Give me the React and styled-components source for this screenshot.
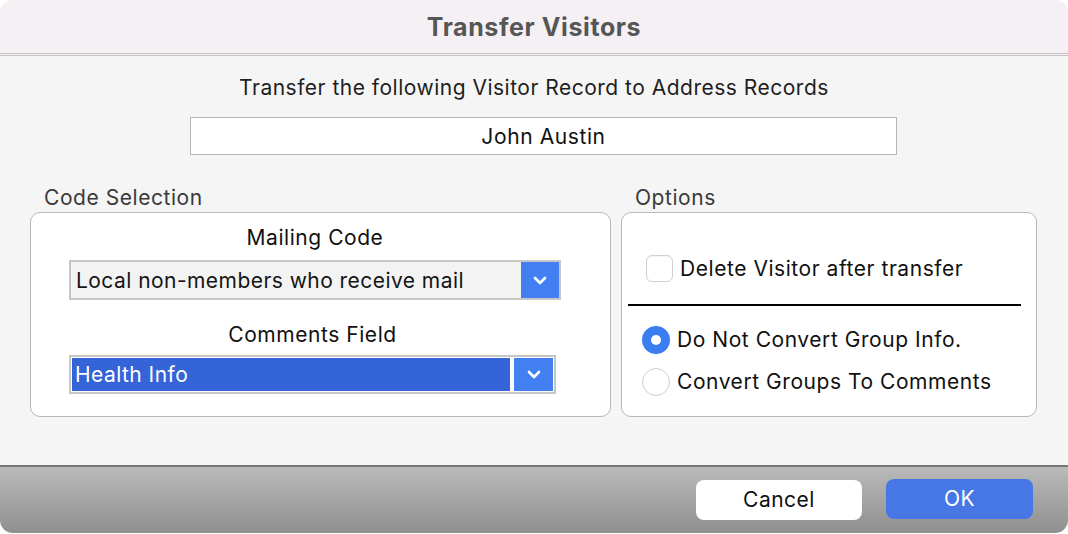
import React from 'react';
import styled, { createGlobalStyle } from 'styled-components';

const GlobalStyle = createGlobalStyle`
  html, body {
    margin: 0;
    padding: 0;
    background: #ffffff;
  }
  body {
    font-family: Inter, "Liberation Sans", Arial, sans-serif;
    color: #1c1c1c;
  }
`;

const Chevron = () => (
  <svg width="14" height="9" viewBox="0 0 14 9">
    <polyline points="2,2 7,7 12,2" fill="none" stroke="#fff" strokeWidth="2.6" strokeLinecap="round" strokeLinejoin="round" />
  </svg>
);

export default function App() {
  return (
    <>
      <GlobalStyle />
      <Window>
        <TitleBar>Transfer Visitors</TitleBar>
        <Body>
          <Prompt>Transfer the following Visitor Record to Address Records</Prompt>
          <NameBox>John Austin</NameBox>
          <Groups>
            <Group width="581px">
              <GroupLabel>Code Selection</GroupLabel>
              <GroupBox padding="13px 0 0 38px">
                <Field width="492px">
                  <FieldLabel>Mailing Code</FieldLabel>
                  <Select>
                    <SelectValue>Local non-members who receive mail</SelectValue>
                    <ArrowButton width="38px"><Chevron /></ArrowButton>
                  </Select>
                </Field>
                <Field width="487px" top="23px">
                  <FieldLabel>Comments Field</FieldLabel>
                  <Select focused>
                    <SelectValue focused>Health Info</SelectValue>
                    <ArrowButton width="39px"><Chevron /></ArrowButton>
                  </Select>
                </Field>
              </GroupBox>
            </Group>
            <Group width="416px">
              <GroupLabel>Options</GroupLabel>
              <GroupBox padding="42px 0 0 0">
                <CheckRow>
                  <Checkbox />
                  <OptionText>Delete Visitor after transfer</OptionText>
                </CheckRow>
                <Divider />
                <RadioList>
                  <RadioRow>
                    <Radio checked />
                    <OptionText>Do Not Convert Group Info.</OptionText>
                  </RadioRow>
                  <RadioRow>
                    <Radio />
                    <OptionText>Convert Groups To Comments</OptionText>
                  </RadioRow>
                </RadioList>
              </GroupBox>
            </Group>
          </Groups>
        </Body>
        <Footer>
          <Button>Cancel</Button>
          <Button primary>OK</Button>
        </Footer>
      </Window>
    </>
  );
}

const Window = styled.div`
  width: 1068px;
  height: 533px;
  border-radius: 13px;
  overflow: hidden;
  display: flex;
  flex-direction: column;
  background: #f5f5f5;
`;

const TitleBar = styled.div`
  height: 56px;
  flex: none;
  display: flex;
  align-items: center;
  justify-content: center;
  background: #f4f0f4;
  border-bottom: 3px double #c4c4c4;
  box-sizing: border-box;
  font-weight: 700;
  font-size: 25px;
  letter-spacing: 0.6px;
  color: #565656;
  padding-top: 1px;
`;

const Body = styled.div`
  flex: 1;
  display: flex;
  flex-direction: column;
  padding-top: 20px;
`;

const Prompt = styled.div`
  text-align: center;
  font-size: 21px;
  line-height: 24px;
  letter-spacing: 0.5px;
  color: #1e1e1e;
`;

const NameBox = styled.div`
  margin: 17px 0 0 190px;
  width: 707px;
  height: 38px;
  box-sizing: border-box;
  border: 1px solid #b4b4b4;
  background: #ffffff;
  display: flex;
  align-items: center;
  justify-content: center;
  font-size: 21px;
  letter-spacing: 0.6px;
  color: #111;
`;

const Groups = styled.div`
  display: flex;
  gap: 10px;
  margin: 31px 0 0 30px;
`;

const Group = styled.div`
  width: ${p => p.width};
  display: flex;
  flex-direction: column;
`;

const GroupLabel = styled.div`
  font-size: 21px;
  line-height: 24px;
  height: 26px;
  padding-left: 14px;
  color: #3a3a3a;
  letter-spacing: 0.55px;
`;

const GroupBox = styled.div`
  height: 205px;
  box-sizing: border-box;
  border: 1px solid #b8b8b8;
  border-radius: 10px;
  background: #ffffff;
  padding: ${p => p.padding};
  display: flex;
  flex-direction: column;
`;

const Field = styled.div`
  width: ${p => p.width};
  margin-top: ${p => p.top || '0'};
  display: flex;
  flex-direction: column;
`;

const FieldLabel = styled.div`
  text-align: center;
  font-size: 21px;
  line-height: 24px;
  color: #111;
  letter-spacing: 0.55px;
  margin-bottom: 10px;
`;

const Select = styled.div`
  height: ${p => (p.focused ? '39px' : '40px')};
  box-sizing: border-box;
  border: 2px solid #c6c6c6;
  background: ${p => (p.focused ? '#ffffff' : '#f3f3f3')};
  padding: ${p => (p.focused ? '1px' : '0')};
  gap: ${p => (p.focused ? '4px' : '0')};
  display: flex;
  margin-top: ${p => (p.focused ? '-2px' : '0')};
`;

const SelectValue = styled.div`
  flex: 1;
  display: flex;
  align-items: center;
  padding-left: ${p => (p.focused ? '3px' : '5px')};
  font-size: 21px;
  color: ${p => (p.focused ? '#ffffff' : '#151515')};
  background: ${p => (p.focused ? '#3464d8' : 'transparent')};
  letter-spacing: 0.45px;
`;

const ArrowButton = styled.div`
  width: ${p => p.width};
  flex: none;
  background: #4280f2;
  display: flex;
  align-items: center;
  justify-content: center;
`;

const CheckRow = styled.div`
  display: flex;
  align-items: center;
  gap: 7px;
  padding-left: 24px;
`;

const Checkbox = styled.div`
  width: 27px;
  height: 27px;
  box-sizing: border-box;
  border: 1px solid #d0d0d0;
  border-radius: 6px;
  background: #ffffff;
  box-shadow: inset 0 1px 1px rgba(0, 0, 0, 0.04);
`;

const OptionText = styled.div`
  font-size: 21px;
  line-height: 24px;
  color: #111;
  letter-spacing: 0.55px;
`;

const Divider = styled.div`
  height: 2px;
  background: #000;
  margin: 22px 15px 0 6px;
`;

const RadioList = styled.div`
  display: flex;
  flex-direction: column;
  gap: 14px;
  margin-top: 20px;
  padding-left: 20px;
`;

const RadioRow = styled.div`
  display: flex;
  align-items: center;
  gap: 7px;
`;

const Radio = styled.div`
  width: 28px;
  height: 28px;
  box-sizing: border-box;
  border-radius: 50%;
  background: ${p => (p.checked ? '#3b7ef0' : '#ffffff')};
  border: ${p => (p.checked ? '9px solid #3b7ef0' : '1px solid #cfcfcf')};
  position: relative;
  &::after {
    content: '';
    display: ${p => (p.checked ? 'block' : 'none')};
    position: absolute;
    inset: 0;
    border-radius: 50%;
    background: #ffffff;
  }
`;

const Footer = styled.div`
  height: 68px;
  flex: none;
  box-sizing: border-box;
  border-top: 2px solid #767676;
  background: linear-gradient(#bababa, #8f8f8f);
  display: flex;
  align-items: center;
  justify-content: flex-end;
  gap: 24px;
  padding: 0 35px 0 0;
`;

const Button = styled.div`
  width: ${p => (p.primary ? '147px' : '166px')};
  height: 40px;
  border-radius: 8px;
  display: flex;
  align-items: center;
  justify-content: center;
  font-size: 21px;
  letter-spacing: 0.5px;
  color: ${p => (p.primary ? '#ffffff' : '#111')};
  background: ${p => (p.primary ? '#4777e4' : '#ffffff')};
  margin-top: ${p => (p.primary ? '-3px' : '-1px')};
`;
